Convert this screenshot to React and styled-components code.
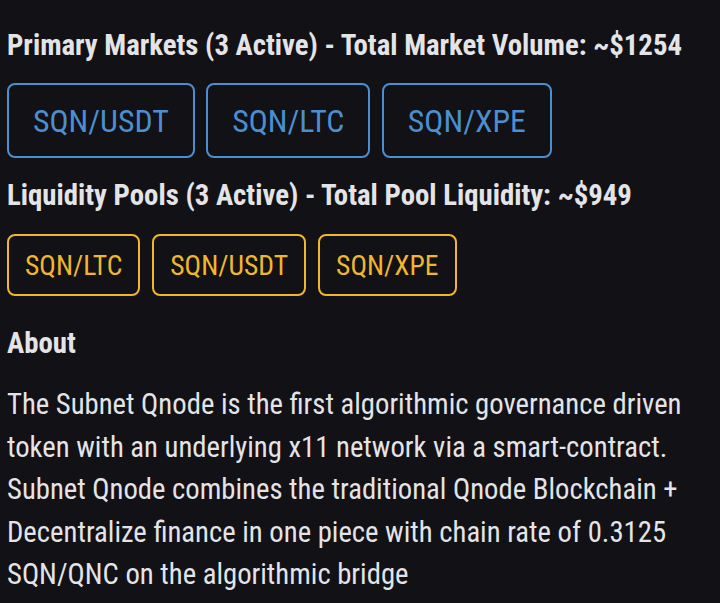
import React from "react";
import styled, { createGlobalStyle } from "styled-components";

const Global = createGlobalStyle`
  html, body { margin: 0; padding: 0; background: #111116; }
  body { font-family: "Roboto Condensed", "Roboto", "Liberation Sans", sans-serif; font-stretch: condensed; }
`;

const Page = styled.div`
  padding: 24px 7px 0 7px;
  color: #e4e4e7;
  display: flex;
  flex-direction: column;
`;

const Heading = styled.h2`
  margin: 0;
  font-size: 28.8px;
  font-weight: 700;
  line-height: 42px;
  color: #e4e4e7;
`;

const Row = styled.div`
  display: flex;
  gap: ${(p) => p.$gap}px;
  margin: ${(p) => p.$m};
`;

const Pair = styled.button`
  font-family: inherit;
  font-stretch: condensed;
  background: transparent;
  border: 2px solid ${(p) => p.$color};
  color: ${(p) => p.$color};
  border-radius: 8px;
  font-size: ${(p) => p.$size}px;
  padding: 0 ${(p) => p.$px}px;
  height: ${(p) => p.$h}px;
  display: flex;
  align-items: center;
`;

const Para = styled.p`
  margin: 19px 0 0 0;
  font-size: 28.7px;
  line-height: 42.5px;
  color: #e4e4e7;
`;

const BLUE = "#4b8fd1";
const GOLD = "#f0b72c";

export default function App() {
  return (
    <>
      <Global />
      <Page>
        <Heading>Primary Markets (3 Active) - Total Market Volume: ~$1254</Heading>
        <Row $gap={11.5} $m="17px 0 16px 0">
          {["SQN/USDT", "SQN/LTC", "SQN/XPE"].map((t) => (
            <Pair key={t} $color={BLUE} $size={31.8} $px={24} $h={75}>{t}</Pair>
          ))}
        </Row>
        <Heading>Liquidity Pools (3 Active) - Total Pool Liquidity: ~$949</Heading>
        <Row $gap={12} $m="18px 0 26px 0">
          {["SQN/LTC", "SQN/USDT", "SQN/XPE"].map((t) => (
            <Pair key={t} $color={GOLD} $size={27.6} $px={16} $h={62}>{t}</Pair>
          ))}
        </Row>
        <Heading>About</Heading>
        <Para>
          The Subnet Qnode is the first algorithmic governance driven token with an underlying x11 network via a smart-contract. Subnet Qnode combines the traditional Qnode Blockchain + Decentralize finance in one piece with chain rate of 0.3125 SQN/QNC on the algorithmic bridge
        </Para>
      </Page>
    </>
  );
}
